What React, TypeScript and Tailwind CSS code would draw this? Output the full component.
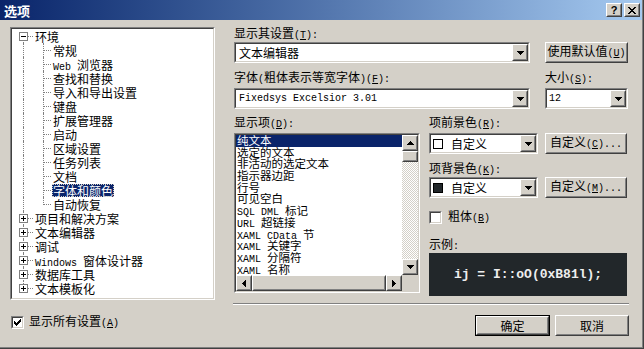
import React from 'react';

const MONO = "font-['Liberation_Mono','Noto_Sans_CJK_SC',monospace] text-[10px]";

// ascii runs go half-width like the old SimSun dialogs
const Mix = ({ s }: { s: string }) => (
  <span className="whitespace-pre">
    {s
      .split(/([\x20-\x7E]+)/)
      .filter(Boolean)
      .map((p, i) =>
        /^[\x20-\x7E]+$/.test(p) ? (
          <span key={i} className={MONO}>
            {p}
          </span>
        ) : (
          <span key={i}>{p}</span>
        )
      )}
  </span>
);

const Acc = ({ pre, k, post = ':' }: { pre: string; k: string; post?: string }) => (
  <span className="whitespace-nowrap">
    <Mix s={pre} />
    <span className={`${MONO} whitespace-pre`}>
      (<span className="underline underline-offset-1">{k}</span>){post}
    </span>
  </span>
);

const Raised = ({ className = '', children }: { className?: string; children?: React.ReactNode }) => (
  <div className={`border border-t-white border-l-white border-r-[#404040] border-b-[#404040] bg-[#D4D0C8] ${className}`}>
    <div className="h-full w-full border border-transparent border-r-[#808080] border-b-[#808080] flex items-center justify-center">
      {children}
    </div>
  </div>
);

const Sunken = ({ className = '', inner = '', children }: { className?: string; inner?: string; children?: React.ReactNode }) => (
  <div className={`border border-t-[#808080] border-l-[#808080] border-r-white border-b-white ${className}`}>
    <div className={`h-full w-full border border-t-[#404040] border-l-[#404040] border-r-[#D4D0C8] border-b-[#D4D0C8] ${inner}`}>
      {children}
    </div>
  </div>
);

const Tri = ({ dir }: { dir: 'up' | 'down' | 'left' | 'right' }) => {
  const pts = { down: '0,0 7,0 3.5,4', up: '0,4 7,4 3.5,0', left: '4,0 4,7 0,3.5', right: '0,0 0,7 4,3.5' }[dir];
  const v = dir === 'up' || dir === 'down';
  return (
    <svg width={v ? 7 : 4} height={v ? 4 : 7} shapeRendering="crispEdges">
      <polygon points={pts} fill="#000" />
    </svg>
  );
};

const Combo = ({ w, children }: { w: string; children: React.ReactNode }) => (
  <Sunken className={`h-[21px] ${w}`} inner="flex items-center bg-white">
    <div className="flex-1 flex items-center pl-[1px] overflow-hidden">{children}</div>
    <Raised className="w-[16px] h-[17px]">
      <Tri dir="down" />
    </Raised>
  </Sunken>
);

const Check = ({ on }: { on?: boolean }) => (
  <Sunken className="w-[13px] h-[13px]" inner="bg-white flex items-center justify-center">
    {on && (
      <svg width="7" height="7" shapeRendering="crispEdges">
        <polygon points="0,2 2,4 7,-1 7,2 2,7 0,5" fill="#000" />
      </svg>
    )}
  </Sunken>
);

const tree: { t: string; lvl: number; box?: string; sel?: boolean }[] = [
  { t: '环境', lvl: 0, box: '-' },
  { t: '常规', lvl: 1 },
  { t: 'Web 浏览器', lvl: 1 },
  { t: '查找和替换', lvl: 1 },
  { t: '导入和导出设置', lvl: 1 },
  { t: '键盘', lvl: 1 },
  { t: '扩展管理器', lvl: 1 },
  { t: '启动', lvl: 1 },
  { t: '区域设置', lvl: 1 },
  { t: '任务列表', lvl: 1 },
  { t: '文档', lvl: 1 },
  { t: '字体和颜色', lvl: 1, sel: true },
  { t: '自动恢复', lvl: 1 },
  { t: '项目和解决方案', lvl: 0, box: '+' },
  { t: '文本编辑器', lvl: 0, box: '+' },
  { t: '调试', lvl: 0, box: '+' },
  { t: 'Windows 窗体设计器', lvl: 0, box: '+' },
  { t: '数据库工具', lvl: 0, box: '+' },
  { t: '文本模板化', lvl: 0, box: '+' },
];

const items = [
  '纯文本',
  '选定的文本',
  '非活动的选定文本',
  '指示器边距',
  '行号',
  '可见空白',
  'SQL DML 标记',
  'URL 超链接',
  'XAML CData 节',
  'XAML 关键字',
  'XAML 分隔符',
  'XAML 名称',
];

const TreeRow = ({ i }: { i: number }) => {
  const r = tree[i];
  const first = i === 0;
  const last = i === tree.length - 1;
  const lastChild = r.lvl === 1 && tree[i + 1]?.lvl !== 1;
  return (
    <div className="relative h-[14px] flex items-center">
      <span
        className={`absolute left-[11px] border-l border-dotted border-[#808080] ${
          first ? 'top-[7px] bottom-0' : last ? 'top-0 h-[7px]' : 'top-0 bottom-0'
        }`}
      />
      {r.lvl === 1 && (
        <>
          <span className={`absolute left-[31px] border-l border-dotted border-[#808080] ${lastChild ? 'top-0 h-[8px]' : 'top-0 bottom-0'}`} />
          <span className="absolute left-[32px] top-[7px] w-[7px] border-t border-dotted border-[#808080]" />
        </>
      )}
      {r.box && (
        <>
          <span className="absolute left-[16px] top-[7px] w-[5px] border-t border-dotted border-[#808080]" />
          <span className="absolute left-[7px] top-[3px] w-[9px] h-[9px] border border-[#808080] bg-white flex items-center justify-center">
            <svg width="5" height="5" shapeRendering="crispEdges">
              <rect x="0" y="2" width="5" height="1" fill="#000" />
              {r.box === '+' && <rect x="2" y="0" width="1" height="5" fill="#000" />}
            </svg>
          </span>
        </>
      )}
      <span
        className={`${r.lvl === 0 ? 'ml-[22px]' : 'ml-[40px]'} px-[1px] h-[13px] block leading-[13px] ${
          r.sel ? 'bg-[#0A246A] text-white outline-1 outline-dotted outline-[#D4D0C8] -outline-offset-1' : ''
        }`}
      >
        <Mix s={r.t} />
      </span>
    </div>
  );
};

export default function App() {
  return (
    <div className="w-[644px] h-[349px] overflow-hidden bg-[#D4D0C8] text-black font-['Noto_Sans_CJK_SC',sans-serif] text-[12px] leading-[14px] border-r border-b border-r-[#404040] border-b-[#404040]">
      <div className="h-full w-full border-r border-b border-r-[#808080] border-b-[#808080] flex flex-col">
        {/* title bar */}
        <div className="h-[20px] flex items-center justify-between bg-gradient-to-r from-[#0A246A] to-[#A6CAF0] pl-[4px] pr-[2px]">
          <span className="text-white font-bold text-[13px] leading-none">选项</span>
          <div className="flex gap-[2px]">
            <Raised className="w-[16px] h-[14px]">
              <span className="font-['Liberation_Sans',sans-serif] font-bold text-[11px] leading-none">?</span>
            </Raised>
            <Raised className="w-[16px] h-[14px]">
              <svg width="8" height="7" shapeRendering="crispEdges">
                <path d="M0 0h2l2 2.5L6 0h2L5 3.5 8 7H6L4 4.5 2 7H0l3-3.5z" fill="#000" />
              </svg>
            </Raised>
          </div>
        </div>

        <div className="flex">
          {/* left */}
          <div className="ml-[10px] w-[205px] flex flex-col">
            <Sunken className="mt-[7px] h-[273px] w-[205px]" inner="bg-white overflow-hidden">
              {tree.map((_, i) => (
                <TreeRow key={i} i={i} />
              ))}
            </Sunken>
            <div className="mt-[14px] ml-[1px] flex items-center gap-[5px]">
              <Check on />
              <Acc pre="显示所有设置" k="A" post="" />
            </div>
          </div>

          {/* right */}
          <div className="ml-[19px] w-[395px] flex flex-col">
            <div className="mt-[7px] h-[14px] flex items-center">
              <Acc pre="显示其设置" k="T" />
            </div>
            <div className="mt-[1px] flex">
              <Combo w="w-[296px]">
                <span className="ml-[2px]">文本编辑器</span>
              </Combo>
              <Raised className="ml-[15px] w-[83px] h-[21px]">
                <Acc pre="使用默认值" k="U" post="" />
              </Raised>
            </div>
            <div className="mt-[8px] h-[14px] flex items-center">
              <div className="w-[311px]">
                <Acc pre="字体(粗体表示等宽字体)" k="F" />
              </div>
              <Acc pre="大小" k="S" />
            </div>
            <div className="mt-[3px] flex">
              <Combo w="w-[296px]">
                <span className={`${MONO} ml-[2px] whitespace-pre`}>Fixedsys Excelsior 3.01</span>
              </Combo>
              <div className="ml-[15px]">
                <Combo w="w-[83px]">
                  <span className={`${MONO} ml-[1px]`}>12</span>
                </Combo>
              </div>
            </div>
            <div className="mt-[7px] h-[14px] flex items-center">
              <div className="w-[195px]">
                <Acc pre="显示项" k="D" />
              </div>
              <Acc pre="项前景色" k="R" />
            </div>

            <div className="mt-[3px] flex">
              {/* list */}
              <Sunken className="w-[186px] h-[160px]" inner="bg-white grid grid-cols-[166px_16px] grid-rows-[140px_16px]">
                <div className="overflow-hidden">
                  {items.map((s, i) => (
                    <div
                      key={s}
                      className={`h-[11.7px] overflow-hidden pl-[1px] text-[11.5px] leading-[11.7px] ${i === 0 ? 'bg-[#0A246A] text-white' : ''}`}
                    >
                      <Mix s={s} />
                    </div>
                  ))}
                </div>
                <div className="flex flex-col">
                  <Raised className="w-[16px] h-[16px]">
                    <Tri dir="up" />
                  </Raised>
                  <Raised className="w-[16px] h-[11px]" />
                  <div className="flex-1 bg-[repeating-conic-gradient(#ffffff_0_25%,#D4D0C8_0_50%)] bg-[length:2px_2px]" />
                  <Raised className="w-[16px] h-[16px]">
                    <Tri dir="down" />
                  </Raised>
                </div>
                <div className="flex">
                  <Raised className="w-[16px] h-[16px]">
                    <Tri dir="left" />
                  </Raised>
                  <Raised className="flex-1 h-[16px]" />
                  <Raised className="w-[16px] h-[16px]">
                    <Tri dir="right" />
                  </Raised>
                </div>
                <div className="bg-[#D4D0C8]" />
              </Sunken>

              {/* colours */}
              <div className="ml-[9px] w-[200px] flex flex-col">
                <div className="flex">
                  <Combo w="w-[109px]">
                    <span className="ml-[1px] w-[10px] h-[10px] border border-black bg-white" />
                    <span className="ml-[8px]">自定义</span>
                  </Combo>
                  <Raised className="ml-[7px] w-[82px] h-[21px]">
                    <Acc pre="自定义" k="C" post="..." />
                  </Raised>
                </div>
                <div className="mt-[8px] h-[14px] flex items-center">
                  <Acc pre="项背景色" k="K" />
                </div>
                <div className="mt-[1px] flex">
                  <Combo w="w-[109px]">
                    <span className="ml-[1px] w-[10px] h-[10px] border border-black bg-[#22272A]" />
                    <span className="ml-[8px]">自定义</span>
                  </Combo>
                  <Raised className="ml-[7px] w-[82px] h-[21px]">
                    <Acc pre="自定义" k="M" post="..." />
                  </Raised>
                </div>
                <div className="mt-[11px] flex items-center gap-[6px]">
                  <Check />
                  <Acc pre="粗体" k="B" post="" />
                </div>
                <div className="mt-[12px] h-[14px] flex items-center">
                  <Mix s="示例:" />
                </div>
                <div className="mt-[1px] w-[198px] h-[43px] bg-[#22272A] flex items-center justify-center">
                  <span className="font-['Liberation_Mono',monospace] font-bold text-[13px] text-[#EEEEEE] whitespace-pre">
                    ij = I::oO(0xB81l);
                  </span>
                </div>
              </div>
            </div>

            <div className="mt-[7px] -ml-[1px] h-[2px] border-t border-b border-t-[#808080] border-b-white" />

            <div className="mt-[10px] flex justify-end gap-[5px]">
              <div className="border border-black">
                <Raised className="w-[73px] h-[19px]">确定</Raised>
              </div>
              <Raised className="w-[74px] h-[21px]">取消</Raised>
            </div>
          </div>
        </div>
      </div>
    </div>
  );
}
